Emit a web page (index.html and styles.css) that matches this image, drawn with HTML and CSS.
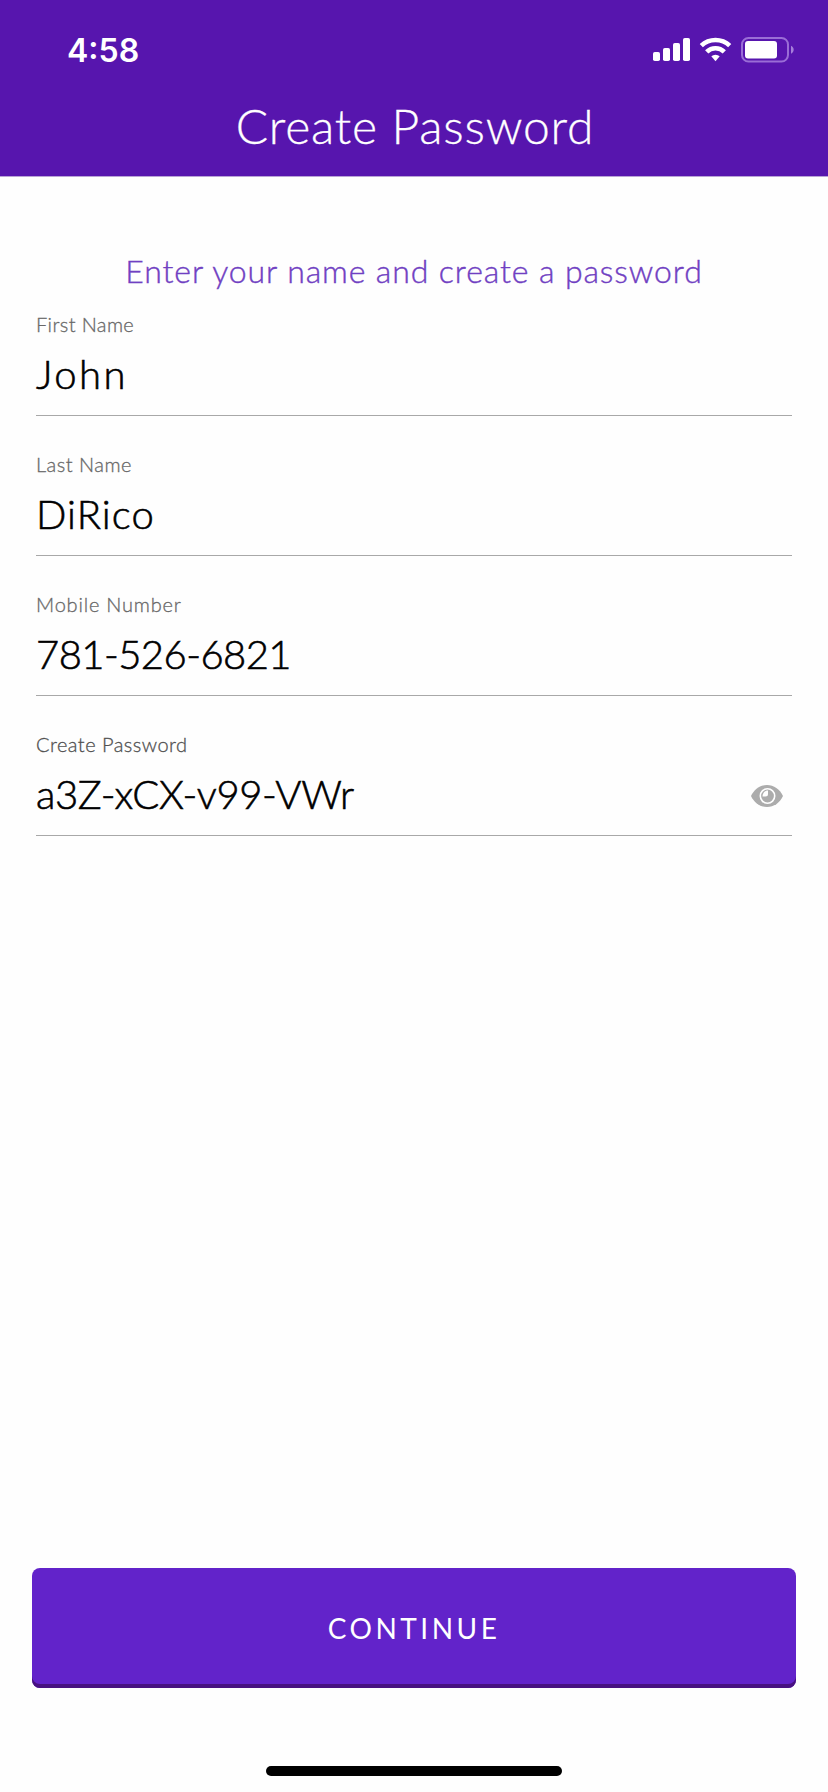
FILE: index.html
```html
<!DOCTYPE html>
<html lang="en">
<head>
    <meta charset="UTF-8">
    <meta name="viewport" content="width=device-width, initial-scale=1.0">
    <title>Create Password</title>
    <link rel="stylesheet" href="styles.css">
</head>
<body>

<div class="screen">
    <header class="header">
        <div class="status-bar">
            <span class="time">4:58</span>
            <svg class="status-icons" width="142" height="26" viewBox="0 0 142 26" fill="#fff">
                <!-- signal -->
                <rect x="0" y="15" width="7" height="9" rx="1.8"/>
                <rect x="10" y="11" width="7" height="13" rx="1.8"/>
                <rect x="20" y="6" width="7" height="18" rx="1.8"/>
                <rect x="30" y="1" width="7" height="23" rx="1.8"/>
                <!-- wifi -->
                <g fill="none" stroke="#fff" stroke-width="4.6">
                    <path d="M48.3 8.7a20.5 20.5 0 0 1 28.4 0"/>
                    <path d="M53.7 14.9a12.5 12.5 0 0 1 17.6 0"/>
                </g>
                <path d="M58.3 19.3a6.4 6.4 0 0 1 8.4 0L62.5 24.2z"/>
                <!-- battery -->
                <rect x="89" y="1" width="46" height="23.5" rx="6.5" fill="none" stroke="#9a6dd6" stroke-width="2"/>
                <rect x="92" y="4" width="32" height="17.5" rx="3"/>
                <path d="M138 8.7v8c3.6-1.5 3.6-6.5 0-8z" fill="#a67edb"/>
            </svg>
        </div>
        <h1 class="title">Create Password</h1>
    </header>

    <main class="form">
        <p class="intro">Enter your name and create a password</p>

        <div class="field">
            <div class="label label-first">First Name</div>
            <div class="value value-first">John</div>
        </div>
        <div class="field">
            <div class="label label-last">Last Name</div>
            <div class="value value-last">DiRico</div>
        </div>
        <div class="field">
            <div class="label label-mobile">Mobile Number</div>
            <div class="value value-mobile">781-526-6821</div>
        </div>
        <div class="field">
            <div class="label label-password">Create Password</div>
            <div class="row">
                <div class="value value-password">a3Z-xCX-v99-VWr</div>
                <svg class="eye" width="32" height="22" viewBox="0 0 32 22">
                    <path d="M0 11C3.500 4 9 0 16 0s12.500 4 16 11c-3.500 7-9 11-16 11S3.500 18 0 11z" fill="#acacac"/>
                    <circle cx="16.500" cy="11" r="7.200" fill="#acacac" stroke="#fff" stroke-width="1.600"/>
                    <path d="M17 5.500v3.500a2.500 2.500 0 0 1-2.500 2.500h-3c0-3.300 2.200-6 5.500-6z" fill="#fff"/>
                </svg>
            </div>
        </div>
    </main>

    <footer class="footer">
        <button class="continue">CONTINUE</button>
        <div class="home-indicator"></div>
    </footer>
</div>

</body>
</html>
```

FILE: styles.css
```css
* {
    box-sizing: border-box;
}
body {
    margin: 0;
    background-color: #fefefe;
    font-family: Lato, "Open Sans", sans-serif;
    font-weight: 300;
}
.screen {
    display: flex;
    flex-direction: column;
    height: 1792px;
}
.header {
    height: 177px;
    background-color: #5715ae;
    border-bottom: 1px solid #b9a3d6;
    color: #fff;
}
.status-bar {
    display: flex;
    justify-content: space-between;
    height: 88px;
    padding: 37px 33px 0 67px;
}
.time {
    font-family: Inter, sans-serif;
    font-size: 32px;
    font-weight: 600;
    line-height: 27px;
}
.title {
    margin: 0;
    padding-left: 2px;
    font-size: 48px;
    font-weight: 300;
    line-height: 76px;
    letter-spacing: 0.8px;
    text-align: center;
    -webkit-text-stroke: 0.3px #fff;
}
.form {
    flex: 1;
    padding: 74px 36px 0;
}
.intro {
    margin: 0 0 19px;
    font-size: 32px;
    line-height: 40px;
    letter-spacing: 0.9px;
    color: #7040c2;
    text-align: center;
    -webkit-text-stroke: 0.4px #7040c2;
}
.field {
    height: 106px;
    margin-bottom: 34px;
    border-bottom: 1px solid #a8a8a8;
}
.label {
    margin-bottom: 12px;
    font-size: 20px;
    line-height: 28px;
    color: #686868;
    -webkit-text-stroke: 0.3px currentColor;
}
.label-first {
    letter-spacing: 0.38px;
}
.label-last {
    letter-spacing: 0.5px;
}
.label-mobile {
    letter-spacing: 0.8px;
}
.label-password {
    letter-spacing: 0.48px;
    color: #505050;
}
.value {
    font-size: 40px;
    line-height: 48px;
    color: #000;
    white-space: nowrap;
    -webkit-text-stroke: 0.6px #000;
}
.value-first {
    letter-spacing: 2.5px;
}
.value-last {
    letter-spacing: 1.1px;
}
.value-mobile {
    letter-spacing: -0.55px;
}
.value-password {
    letter-spacing: -0.4px;
}
.row {
    display: flex;
    justify-content: space-between;
    align-items: center;
    padding-right: 9px;
}
.eye {
    margin-top: 4px;
}
.footer {
    display: flex;
    flex-direction: column;
    align-items: center;
    height: 224px;
    padding: 0 32px;
}
.continue {
    width: 100%;
    height: 120px;
    padding: 0;
    border: none;
    border-radius: 8px;
    background-color: #6223ca;
    box-shadow: inset 0 -4px 0 #471180;
    color: #fff;
    font-family: inherit;
    font-size: 28px;
    font-weight: 400;
    letter-spacing: 3.5px;
}
.home-indicator {
    width: 296px;
    height: 10px;
    margin-top: 78px;
    border-radius: 5px;
    background-color: #000;
}
```
